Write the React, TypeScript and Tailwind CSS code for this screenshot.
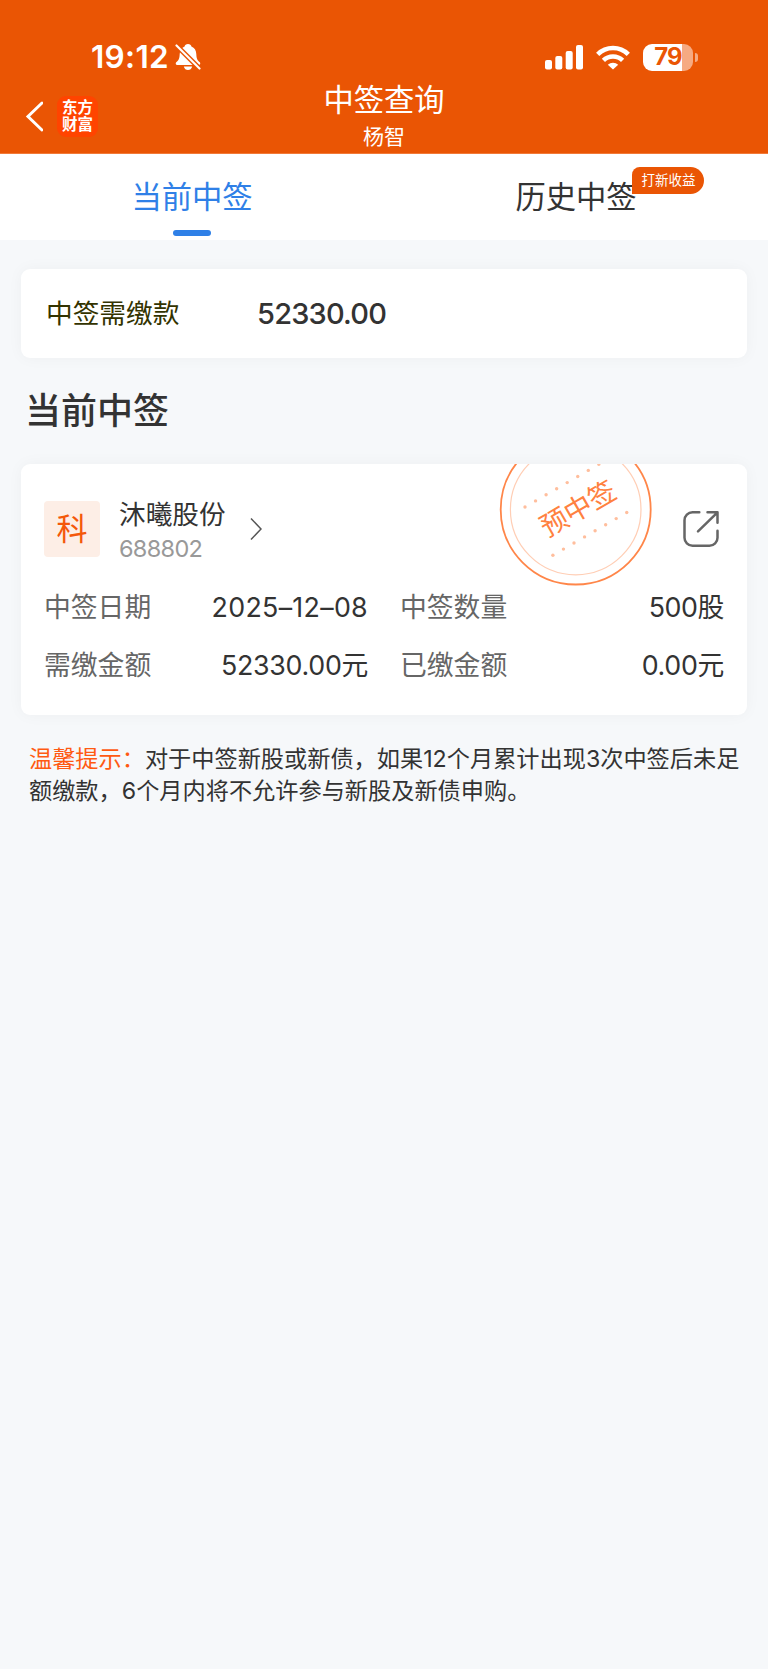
import React from 'react';

interface Field {
  label: string;
  value: string;
  tracking: string;
}

const leftFields: Field[] = [
  { label: '中签日期', value: '2025–12–08', tracking: 'tracking-[0.3px]' },
  { label: '需缴金额', value: '52330.00元', tracking: 'tracking-[-0.3px]' },
];

const rightFields: Field[] = [
  { label: '中签数量', value: '500股', tracking: 'tracking-[-0.4px]' },
  { label: '已缴金额', value: '0.00元', tracking: 'tracking-[-0.3px]' },
];

const stampDots = [0, 1, 2, 3, 4, 5, 6, 7];

const BellOffIcon: React.FC = () => (
  <svg className="w-[26px] h-[28px]" viewBox="0 0 26 28" fill="none">
    <path
      d="M13 1c-1.9 0-3.2 1.1-3.4 2.6C6.400 4.800 4.900 7.500 4.700 11c-.2 4.700-.9 6-3.500 8.300-.9.9-.5 2.700 1 2.700h21.600c1.500 0 1.900-1.800 1-2.700-2.600-2.300-3.300-3.600-3.500-8.300-.2-3.500-1.700-6.200-4.900-7.400C16.200 2.100 14.900 1 13 1z"
      fill="#fff"
    />
    <path d="M8.800 23.400h8.400c-.6 2.200-2.200 3.600-4.200 3.600s-3.600-1.400-4.200-3.600z" fill="#fff" />
    <path d="M1 2L24 25" stroke="#ea5504" strokeWidth="5" />
    <path d="M1.500 2.500L24.500 25.500" stroke="#fff" strokeWidth="2.200" strokeLinecap="round" />
  </svg>
);

const SignalIcon: React.FC = () => (
  <svg className="w-[38px] h-[25px]" viewBox="0 0 38 25" fill="#fff">
    <rect x="0" y="15" width="7" height="9.500" rx="2" />
    <rect x="10.300" y="11" width="7" height="13.500" rx="2" />
    <rect x="20.700" y="6" width="7" height="18.500" rx="2" />
    <rect x="31" y="0" width="7" height="24.500" rx="2" />
  </svg>
);

const WifiIcon: React.FC = () => (
  <svg className="w-[34px] h-[25px]" viewBox="0 0 34 25" fill="none" stroke="#fff" strokeWidth="4.600">
    <path d="M1.700 9.300a21.800 21.800 0 0 1 30.600 0" />
    <path d="M7.400 15.400a13.800 13.800 0 0 1 19.200 0" />
    <path d="M17 24.500l-5.200-4.800a7.600 7.600 0 0 1 10.400 0z" fill="#fff" stroke="none" />
  </svg>
);

const Battery: React.FC = () => (
  <div className="flex items-center">
    <div className="w-[50px] h-[27px] rounded-[9px] overflow-hidden bg-[linear-gradient(90deg,#fff_78%,#f6aa82_78%)] flex items-center justify-center">
      <span className="text-[24px] leading-none font-bold tracking-[-0.8px] text-[#ea5504]">79</span>
    </div>
    <div className="w-[3px] h-[9px] ml-[2px] rounded-r-full bg-[#f6aa82]"></div>
  </div>
);

const Stamp: React.FC = () => (
  <svg className="absolute top-0 left-[478px] w-[154px] h-[123px]" viewBox="0 0 154 123" fill="none">
    <circle cx="76.700" cy="45.500" r="75" stroke="#ff8649" strokeWidth="1.800" />
    <circle cx="76.700" cy="45.500" r="65.300" stroke="#ffceb5" strokeWidth="1.200" />
    <g fill="#ffbe9d">
      {stampDots.map((i) => (
        <circle key={`t${i}`} cx={26 + i * 10.550} cy={43 - i * 6.100} r="1.700" />
      ))}
      {stampDots.map((i) => (
        <circle key={`b${i}`} cx={53.900 + i * 10.550} cy={91.200 - i * 6.100} r="1.700" />
      ))}
    </g>
    <text
      x="79.200"
      y="54.500"
      transform="rotate(-30 79.200 45)"
      textAnchor="middle"
      fontSize="27.500"
      fill="#ff8140"
    >
      预中签
    </text>
  </svg>
);

const ShareIcon: React.FC = () => (
  <svg
    className="w-[38px] h-[38px]"
    viewBox="0 0 38 38"
    fill="none"
    stroke="#666"
    strokeWidth="2.500"
    strokeLinecap="round"
    strokeLinejoin="round"
  >
    <path d="M17.300 2.300H10.500a8 8 0 0 0-8 8v17.400a8 8 0 0 0 8 8h17a8 8 0 0 0 8-8V20.800" />
    <path d="M25.500 2.300h10v10.500M35 2.800L16 21.300" />
  </svg>
);

const FieldRows: React.FC<{ fields: Field[]; className: string }> = ({ fields, className }) => (
  <div className={`flex flex-col gap-[18px] ${className}`}>
    {fields.map((field) => (
      <div key={field.label} className="flex justify-between items-center h-10 text-[26.800px] whitespace-nowrap">
        <span className="text-[#666]">{field.label}</span>
        <span className={`text-[#333] ${field.tracking}`}>{field.value}</span>
      </div>
    ))}
  </div>
);

const App: React.FC = () => {
  return (
    <div className="w-full min-h-[1669px] bg-[#f6f8fa] font-['Inter','Noto_Sans_CJK_SC',sans-serif] text-[#333]">
      <header className="h-[154px] bg-[#ea5504] border-b border-[#f27a38] text-white">
        <div className="h-[82px] pt-8 pl-[91px] pr-[70px] flex items-center justify-between">
          <div className="flex items-center gap-[6px]">
            <span className="text-[31.500px] leading-none font-semibold tracking-[0.3px]">19:12</span>
            <BellOffIcon />
          </div>
          <div className="flex items-center gap-[13px]">
            <SignalIcon />
            <WifiIcon />
            <Battery />
          </div>
        </div>
        <div className="h-[71px] px-[25px] grid grid-cols-3">
          <div className="flex items-center gap-[14px] pb-[5px]">
            <svg className="w-[18px] h-[31px]" viewBox="0 0 18 31" fill="none">
              <path d="M17 2L3 15.500L17 29" stroke="#fff" strokeWidth="3" strokeLinecap="round" />
            </svg>
            <div className="w-[41px] h-[41px] rounded-[9px] bg-[#ff4400] flex flex-col items-center justify-center text-[15.500px] leading-[17px] font-bold">
              <span>东方</span>
              <span>财富</span>
            </div>
          </div>
          <div className="flex flex-col items-center">
            <h1 className="text-[30.300px] leading-9">中签查询</h1>
            <p className="text-[21px] leading-[37px]">杨智</p>
          </div>
        </div>
      </header>

      <nav className="h-[86px] bg-white grid grid-cols-2 text-[30.300px]">
        <div className="flex flex-col items-center text-[#2f80e7]">
          <span className="leading-[87px] h-[76px]">当前中签</span>
          <div className="w-[38px] h-[6px] rounded-full bg-[#2f80e7]"></div>
        </div>
        <div className="flex justify-center">
          <div className="relative">
            <span className="leading-[87px]">历史中签</span>
            <span className="absolute top-[13px] left-[117px] w-[72px] h-[27px] rounded-[14px] rounded-tl-[8px] rounded-bl-none bg-[#ea5504] text-white text-[13.500px] leading-[27px] text-center whitespace-nowrap">
              打新收益
            </span>
          </div>
        </div>
      </nav>

      <main className="px-[21px] pt-[29px]">
        <section className="h-[89px] pl-[25px] bg-white rounded-[9px] shadow-[0_0_16px_rgba(0,0,0,0.04)] flex items-center">
          <span className="w-[211px] text-[26.700px] text-[#333300]">中签需缴款</span>
          <span className="text-[29px] font-medium tracking-[-0.8px]">52330.00</span>
        </section>

        <h2 className="h-[106px] pl-[4px] text-[36px] leading-[107px] font-medium">当前中签</h2>

        <section className="relative h-[251px] px-[23px] pt-8 bg-white rounded-[9px] shadow-[0_0_16px_rgba(0,0,0,0.04)]">
          <Stamp />
          <div className="h-[66px] flex items-center">
            <div className="w-14 h-14 rounded-[4px] bg-[#fdeee6] text-[#f4580a] text-[31px] leading-14 text-center">科</div>
            <div className="ml-[19px] pt-[4px] flex flex-col">
              <span className="text-[26.700px] leading-9">沐曦股份</span>
              <span className="text-[23.500px] leading-[34px] tracking-[-0.7px] text-[#999]">688802</span>
            </div>
            <svg className="ml-6 w-[12px] h-[24px]" viewBox="0 0 12 24" fill="none">
              <path d="M1 1.500L11 12L1 22.500" stroke="#555" strokeWidth="1.500" />
            </svg>
            <div className="ml-auto mr-[4px]">
              <ShareIcon />
            </div>
          </div>
          <div className="mt-[25px] flex justify-between">
            <FieldRows fields={leftFields} className="w-[324px]" />
            <FieldRows fields={rightFields} className="w-[324px]" />
          </div>
        </section>

        <p className="mt-[29px] pl-2 text-[23.200px] leading-[31.500px] whitespace-nowrap">
          <span className="text-[#ff5a12]">温馨提示：</span>
          对于中签新股或新债，如果12个月累计出现3次中签后未足
          <br />
          额缴款，6个月内将不允许参与新股及新债申购。
        </p>
      </main>
    </div>
  );
};

export default App;
